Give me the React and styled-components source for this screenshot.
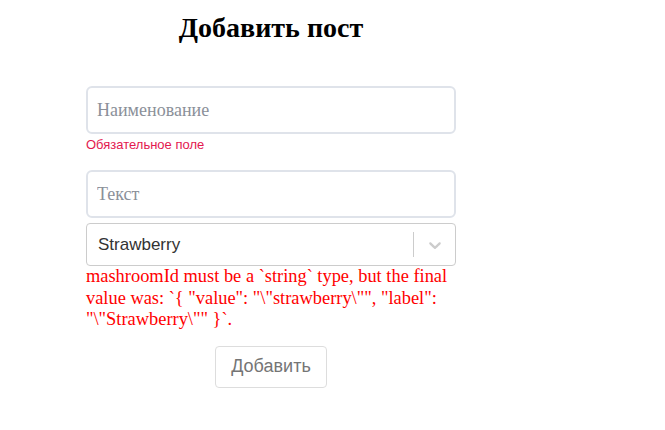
import React from 'react'
import styled, { createGlobalStyle } from 'styled-components'

const GlobalStyle = createGlobalStyle`
  body {
    margin: 0;
    background: #fff;
    font-family: 'Liberation Serif', serif;
  }
`

const Page = styled.div`
  width: 370px;
  margin-left: 86px;
  padding-top: 12px;
`

const Title = styled.h2`
  margin: 0 0 42px;
  text-align: center;
  font-size: 28px;
  line-height: 32px;
  font-weight: 700;
  color: #000;
  font-family: 'Liberation Serif', serif;
`

const Form = styled.form`
  display: flex;
  flex-direction: column;
`

const Field = styled.div`
  display: flex;
  flex-direction: column;
  margin-bottom: ${(p) => p.gap || 0}px;
`

const Input = styled.input`
  box-sizing: border-box;
  width: 100%;
  height: 48px;
  padding: 0 9px;
  border: 2px solid #dfe3ea;
  border-radius: 6px;
  font-family: 'Liberation Serif', serif;
  font-size: 18px;
  color: #222;
  outline: none;
  &::placeholder {
    color: #8b9099;
  }
`

const FieldError = styled.span`
  margin-top: 3px;
  font-family: 'Liberation Sans', sans-serif;
  font-size: 13px;
  line-height: 16px;
  color: #e3184f;
`

const Select = styled.div`
  box-sizing: border-box;
  display: flex;
  align-items: center;
  height: 43px;
  border: 1px solid #cccccc;
  border-radius: 4px;
  background: #fff;
`

const SelectValue = styled.div`
  flex: 1;
  padding-left: 11px;
  font-family: 'Liberation Sans', sans-serif;
  font-size: 17px;
  color: #333;
`

const Separator = styled.span`
  align-self: stretch;
  width: 1px;
  margin: 8px 0;
  background: #cccccc;
`

const Indicator = styled.div`
  display: flex;
  padding: 0 10px 0 11px;
  color: #cccccc;
`

const SchemaError = styled.p`
  margin: 0;
  font-family: 'Liberation Serif', serif;
  font-size: 18.4px;
  line-height: 21.5px;
  color: #ff0000;
`

const Actions = styled.div`
  display: flex;
  justify-content: center;
  margin-top: 15px;
`

const Submit = styled.button`
  box-sizing: border-box;
  width: 112px;
  height: 42px;
  border: 1px solid #dddddd;
  border-radius: 4px;
  background: #fff;
  font-family: 'Liberation Sans', sans-serif;
  font-size: 18px;
  color: #757575;
`

const Chevron = () => (
  <svg width="20" height="20" viewBox="0 0 20 20" fill="currentColor">
    <path d="M4.516 7.548c0.436-0.446 1.043-0.481 1.576 0l3.908 3.747 3.908-3.747c0.533-0.481 1.141-0.446 1.574 0 0.436 0.445 0.408 1.197 0 1.615-0.406 0.418-4.695 4.502-4.695 4.502-0.217 0.223-0.502 0.335-0.787 0.335s-0.57-0.112-0.789-0.335c0 0-4.287-4.084-4.695-4.502s-0.436-1.17 0-1.615z" />
  </svg>
)

export default function App() {
  return (
    <>
      <GlobalStyle />
      <Page>
        <Title>Добавить пост</Title>
        <Form onSubmit={(e) => e.preventDefault()}>
          <Field gap={17}>
            <Input placeholder="Наименование" />
            <FieldError>Обязательное поле</FieldError>
          </Field>
          <Field gap={5}>
            <Input placeholder="Текст" />
          </Field>
          <Select>
            <SelectValue>Strawberry</SelectValue>
            <Separator />
            <Indicator>
              <Chevron />
            </Indicator>
          </Select>
          <SchemaError>
            mashroomId must be a `string` type, but the final value was: `{'{'} "value": "\"strawberry\"", "label": "\"Strawberry\"" {'}'}`.
          </SchemaError>
          <Actions>
            <Submit type="submit">Добавить</Submit>
          </Actions>
        </Form>
      </Page>
    </>
  )
}
